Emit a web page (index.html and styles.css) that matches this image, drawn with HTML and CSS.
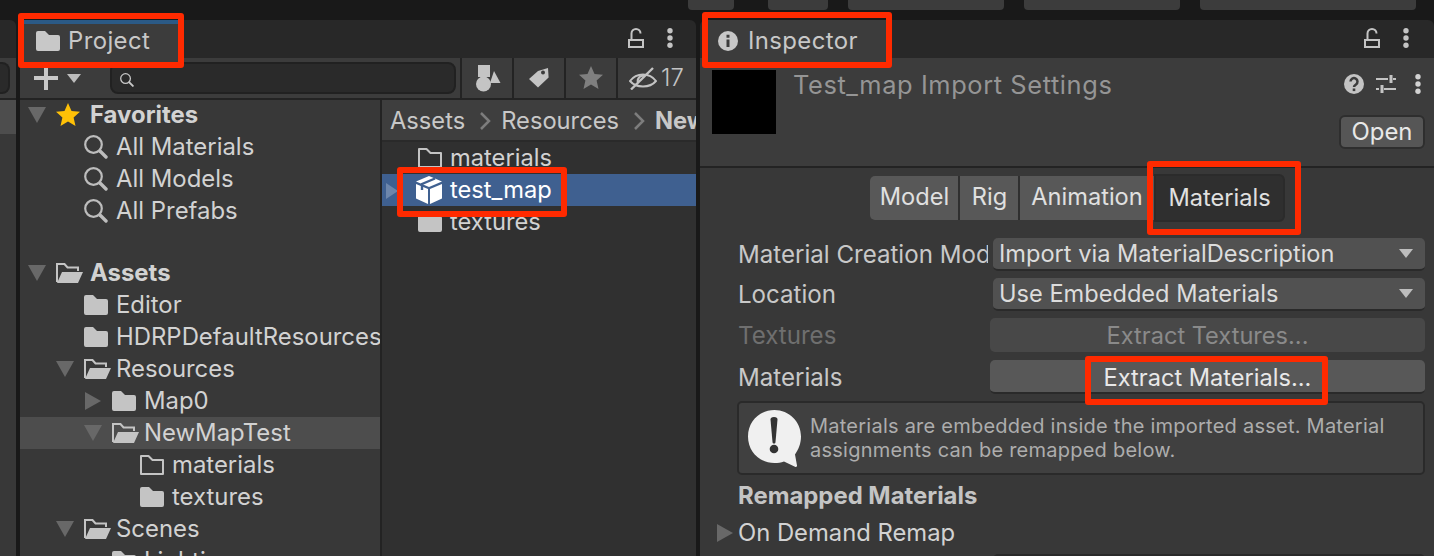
FILE: index.html
```html
<!DOCTYPE html>
<html>
  <head>
    <title>Unity Import Settings</title>
    <link rel="stylesheet" href="styles.css">
  </head>
  <body>
    <svg class="defs" width="0" height="0">
      <symbol id="folder" viewBox="0 0 24 20"><path d="M2 0h7l4 4h9a2 2 0 0 1 2 2v12a2 2 0 0 1-2 2H2a2 2 0 0 1-2-2V2a2 2 0 0 1 2-2z" fill="currentColor"/></symbol>
      <symbol id="folder-line" viewBox="0 0 24 20"><path d="M1 19V1h7.5l4 4H23v14z" fill="none" stroke="currentColor" stroke-width="2" stroke-linejoin="round"/></symbol>
      <symbol id="folder-open" viewBox="0 0 27 20"><path d="M1 19V1h7.5l3 3.5H22V8" fill="none" stroke="currentColor" stroke-width="2"/><path d="M1 20l5-11h21l-5 11z" fill="currentColor"/></symbol>
      <symbol id="lock" viewBox="0 0 16 20"><path d="M1 12h14v7H1z" fill="none" stroke="currentColor" stroke-width="2"/><path d="M3.500 12V5.500a4.500 4.500 0 0 1 9 0" fill="none" stroke="currentColor" stroke-width="2"/></symbol>
      <symbol id="dots" viewBox="0 0 6 20"><circle cx="3" cy="2.700" r="2.700" fill="currentColor"/><circle cx="3" cy="10" r="2.700" fill="currentColor"/><circle cx="3" cy="17.300" r="2.700" fill="currentColor"/></symbol>
      <symbol id="search" viewBox="0 0 24 24"><circle cx="9.500" cy="9.500" r="8.300" fill="none" stroke="currentColor" stroke-width="2.200"/><path d="M16 16l6 6" stroke="currentColor" stroke-width="3.400" stroke-linecap="round"/></symbol>
    </svg>

    <div class="top-bar">
      <span class="top-btn w46"></span>
      <span class="top-btn w60"></span>
      <span class="top-btn w156"></span>
      <span class="top-btn w156"></span>
      <span class="top-btn w216"></span>
    </div>

    <div class="workspace">
      <div class="stub">
        <div class="stub-tabs"></div>
        <div class="stub-tools"><span class="stub-search"></span></div>
        <div class="stub-body"></div>
      </div>

      <section class="panel project">
        <div class="tabbar">
          <div class="tab tab-project">
            <svg class="tab-icon"><use href="#folder"/></svg>
            Project
          </div>
          <div class="tab-actions">
            <svg class="lock"><use href="#lock"/></svg>
            <svg class="dots"><use href="#dots"/></svg>
          </div>
        </div>

        <div class="toolbar">
          <div class="add-btn">
            <svg class="plus" viewBox="0 0 24 24"><path d="M10 0h4v10h10v4H14v10h-4V14H0v-4h10z" fill="currentColor"/></svg>
            <span class="caret"></span>
          </div>
          <div class="search">
            <svg class="search-icon"><use href="#search"/></svg>
          </div>
          <div class="tool-btn tool-type">
            <svg width="25" height="27" viewBox="0 0 25 27"><path d="M2 0h12v12H2z" fill="currentColor"/><circle cx="7.500" cy="19" r="7.500" fill="currentColor"/><path d="M18 6l6.500 12H14z" fill="currentColor"/></svg>
          </div>
          <div class="tool-btn tool-label">
            <svg width="20" height="20" viewBox="0 0 20 20"><path d="M9 3L19 0l.6 9.400L9 19.500 0 11z" fill="currentColor"/><circle cx="14" cy="4.500" r="2" fill="#3c3c3c"/></svg>
          </div>
          <div class="tool-btn tool-star">
            <svg width="24" height="24" viewBox="0 0 24 24"><path d="M12 0l3.500 8 8.500.8-6.400 5.700L19.500 23 12 18.500 4.500 23l1.900-8.500L0 8.800 8.500 8z" fill="#7f7f7f"/></svg>
          </div>
          <div class="tool-btn tool-hidden">
            <svg width="28" height="23" viewBox="0 0 28 23"><path d="M1 14c3-4 7-6.500 13-6.500S24 10 27 14c-3 3.500-7 5.500-13 5.500S4 17.500 1 14z" fill="none" stroke="currentColor" stroke-width="2"/><path d="M9 16a5.500 5.500 0 0 1 7-7" fill="none" stroke="currentColor" stroke-width="2"/><path d="M2 22.500L24 1" stroke="currentColor" stroke-width="2.400"/></svg>
            <span>17</span>
          </div>
        </div>

        <div class="browser">
          <div class="tree">
            <div class="row root">
              <span class="arrow down"></span>
              <svg class="star" viewBox="0 0 24 24"><path d="M12 0l3.500 8 8.500.8-6.400 5.700L19.500 23 12 18.500 4.500 23l1.900-8.500L0 8.800 8.500 8z" fill="#ffc107"/></svg>
              <b>Favorites</b>
            </div>
            <div class="row d1"><span class="arrow"></span><svg class="find"><use href="#search"/></svg>All Materials</div>
            <div class="row d1"><span class="arrow"></span><svg class="find"><use href="#search"/></svg>All Models</div>
            <div class="row d1"><span class="arrow"></span><svg class="find"><use href="#search"/></svg>All Prefabs</div>
            <div class="row-gap"></div>
            <div class="row root">
              <span class="arrow down"></span>
              <svg class="open-icon"><use href="#folder-open"/></svg>
              <b>Assets</b>
            </div>
            <div class="row d1"><span class="arrow"></span><svg class="folder"><use href="#folder"/></svg>Editor</div>
            <div class="row d1"><span class="arrow"></span><svg class="folder"><use href="#folder"/></svg>HDRPDefaultResources</div>
            <div class="row d1"><span class="arrow down"></span><svg class="open-icon"><use href="#folder-open"/></svg>Resources</div>
            <div class="row d2"><span class="arrow right"></span><svg class="folder"><use href="#folder"/></svg>Map0</div>
            <div class="row d2 current"><span class="arrow down"></span><svg class="open-icon"><use href="#folder-open"/></svg>NewMapTest</div>
            <div class="row d3"><span class="arrow"></span><svg class="folder"><use href="#folder-line"/></svg>materials</div>
            <div class="row d3"><span class="arrow"></span><svg class="folder"><use href="#folder"/></svg>textures</div>
            <div class="row d1"><span class="arrow down"></span><svg class="open-icon"><use href="#folder-open"/></svg>Scenes</div>
            <div class="row d2"><span class="arrow"></span><svg class="folder"><use href="#folder"/></svg>Lighting</div>
          </div>

          <div class="files">
            <div class="crumbs">
              <span>Assets</span>
              <svg class="chev" viewBox="0 0 12 20"><path d="M2 2l8 8-8 8" fill="none" stroke="currentColor" stroke-width="2.500"/></svg>
              <span>Resources</span>
              <svg class="chev" viewBox="0 0 12 20"><path d="M2 2l8 8-8 8" fill="none" stroke="currentColor" stroke-width="2.500"/></svg>
              <b>NewMapTest</b>
            </div>
            <div class="file"><svg class="folder"><use href="#folder-line"/></svg>materials</div>
            <div class="file selected">
              <span class="file-arrow"></span>
              <svg class="box" width="26" height="28" viewBox="0 0 26 28"><path d="M13 0l13 5.500L13 11 0 5.500z" fill="#fff"/><path d="M0 8l12 5v15L0 22.500z" fill="#fff"/><path d="M14 13l12-5v14.500L14 28z" fill="#fff"/><path d="M19 2.500L6 8v6" fill="none" stroke="#3f6090" stroke-width="2.400"/></svg>
              test_map
            </div>
            <div class="file"><svg class="folder"><use href="#folder"/></svg>textures</div>
          </div>
        </div>
      </section>

      <section class="panel inspector">
        <div class="tabbar">
          <div class="tab tab-inspector">
            <svg class="info" viewBox="0 0 20 20"><circle cx="10" cy="10" r="10" fill="currentColor"/><path d="M8.500 8.500h3V16h-3zM8.500 3.800h3v3h-3z" fill="#3c3c3c"/></svg>
            Inspector
          </div>
          <div class="tab-actions">
            <svg class="lock"><use href="#lock"/></svg>
            <svg class="dots"><use href="#dots"/></svg>
          </div>
        </div>

        <header class="asset-head">
          <div class="thumb"></div>
          <h2>Test_map Import Settings</h2>
          <div class="head-right">
            <div class="head-icons">
              <svg class="help" viewBox="0 0 20 20"><circle cx="10" cy="10" r="10" fill="currentColor"/><path d="M6.500 7.500a3.500 3.500 0 1 1 5.500 3c-1.200.8-2 1.200-2 2.500" fill="none" stroke="#3c3c3c" stroke-width="2.500"/><rect x="8.700" y="14.500" width="2.600" height="2.600" fill="#3c3c3c"/></svg>
              <svg class="sliders" viewBox="0 0 20 20"><path d="M0 5h12M17 5h3M0 15h3M8 15h12" stroke="currentColor" stroke-width="2"/><path d="M15 1v8M6 11v8" stroke="currentColor" stroke-width="3"/></svg>
              <svg class="dots"><use href="#dots"/></svg>
            </div>
            <div class="open-btn">Open</div>
          </div>
        </header>

        <div class="inspector-body">
          <div class="seg">
            <div class="seg-item seg-model">Model</div>
            <div class="seg-item seg-rig">Rig</div>
            <div class="seg-item seg-anim">Animation</div>
            <div class="seg-item seg-mat">Materials</div>
          </div>

          <div class="field first">
            <label>Material Creation Mode</label>
            <div class="dropdown">Import via MaterialDescription<span class="caret"></span></div>
          </div>
          <div class="field">
            <label>Location</label>
            <div class="dropdown">Use Embedded Materials<span class="caret"></span></div>
          </div>
          <div class="field field-btn">
            <label class="disabled">Textures</label>
            <div class="btn disabled">Extract Textures...</div>
          </div>
          <div class="field field-btn">
            <label>Materials</label>
            <div class="btn">Extract Materials...</div>
          </div>

          <div class="helpbox">
            <svg class="bubble" width="53" height="57" viewBox="0 0 53 57"><path d="M26.500 0C41 0 53 11.500 53 26.500c0 7-2.500 13-6 18l2 11c.2 1.300-.8 1.700-2 1.200L36 51.500c-3 1-6 1.500-9.500 1.500C11.500 53 0 41.500 0 26.500S11.500 0 26.500 0z" fill="#f0f0f0"/><path d="M22.500 9.500c0-1.500 1-2.500 3.500-2.500s3.500 1 3.500 2.500L27.500 32c-.1 1-.6 1.500-1.500 1.500s-1.400-.5-1.500-1.500z" fill="#333"/><circle cx="26" cy="39" r="4.300" fill="#333"/></svg>
            <p>Materials are embedded inside the imported asset. Material assignments can be remapped below.</p>
          </div>

          <div class="section-title">Remapped Materials</div>
          <div class="foldout"><span class="arrow right"></span>On Demand Remap</div>
          <div class="bottom-field"></div>
        </div>
      </section>
    </div>

    <!-- red annotations on top of the screenshot -->
    <span class="mark mark-project"></span>
    <span class="mark mark-inspector"></span>
    <span class="mark mark-file"></span>
    <span class="mark mark-tab"></span>
    <span class="mark mark-extract"></span>
  </body>
</html>
```

FILE: styles.css
```css
* {
  box-sizing: border-box;
}
html,
body {
  height: 556px;
}
body {
  margin: 0;
  overflow: hidden;
  position: relative;
  background-color: #191919;
  color: #d2d2d2;
  font-family: Inter, "Liberation Sans", sans-serif;
  font-size: 23.9px;
  line-height: 32px;
  white-space: nowrap;
}
.defs {
  position: absolute;
}
svg {
  display: block;
  flex: none;
}
b {
  font-weight: 700;
}

/* top toolbar */
.top-bar {
  height: 20px;
  display: flex;
  gap: 20px;
  padding-left: 688px;
}
.top-btn {
  height: 10px;
  background-color: #3c3c3c;
  border-radius: 0 0 4px 4px;
}
.w46 { width: 46px; margin-right: 14px; }
.w60 { width: 60px; }
.w156 { width: 156px; }
.w216 { width: 216px; }

/* panels */
.workspace {
  height: 536px;
  display: flex;
}
.stub {
  width: 16px;
  margin-right: 4px;
  display: flex;
  flex-direction: column;
}
.stub-tabs {
  height: 38px;
  background-color: #282828;
  border-top-right-radius: 6px;
}
.stub-tools {
  height: 42px;
  background-color: #3c3c3c;
  border-bottom: 2px solid #232323;
  padding-top: 4px;
}
.stub-search {
  display: block;
  width: 10px;
  height: 32px;
  background-color: #2a2a2a;
  border: 2px solid #212121;
  border-left: 0;
  border-radius: 0 8px 8px 0;
}
.stub-body {
  flex: 1;
  background-color: #383838;
}
.stub-body::before {
  content: "";
  display: block;
  height: 34px;
  background-color: #4d4d4d;
}
.panel {
  display: flex;
  flex-direction: column;
}
.project {
  width: 676px;
  margin-right: 4px;
}
.inspector {
  flex: 1;
}
.tabbar {
  height: 38px;
  display: flex;
  justify-content: space-between;
  background-color: #282828;
  border-radius: 6px 6px 0 0;
  flex: none;
}
.tab {
  background-color: #3c3c3c;
  color: #c8c8c8;
  display: flex;
  align-items: center;
  letter-spacing: 0.4px;
}
.tab-project {
  width: 154px;
  margin-left: 4px;
  padding-left: 12px;
  border-top: 4px solid #2b5a86;
}
.tab-inspector {
  width: 184px;
  margin-left: 4px;
  padding: 4px 0 0 14px;
}
.tab-icon {
  width: 24px;
  height: 20px;
  margin-right: 8px;
}
.info {
  width: 20px;
  height: 20px;
  margin-right: 10px;
}
.tab-actions {
  display: flex;
  align-items: center;
  gap: 23px;
  padding: 0 23px 2px 0;
  color: #c4c4c4;
}
.inspector .tab-actions {
  padding-right: 25px;
}
.lock {
  width: 16px;
  height: 20px;
}
.dots {
  width: 6px;
  height: 20px;
}

/* project toolbar */
.toolbar {
  height: 42px;
  flex: none;
  display: flex;
  align-items: stretch;
  background-color: #3c3c3c;
  border-bottom: 2px solid #232323;
}
.add-btn {
  width: 80px;
  padding-left: 14px;
  display: flex;
  align-items: center;
  gap: 9px;
  color: #c8c8c8;
}
.plus {
  width: 24px;
  height: 24px;
}
.caret {
  width: 0;
  height: 0;
  border-left: 7px solid transparent;
  border-right: 7px solid transparent;
  border-top: 9px solid #bdbdbd;
}
.search {
  width: 346px;
  margin: 4px 4px 4px 10px;
  background-color: #2a2a2a;
  border: 2px solid #212121;
  border-radius: 8px;
  padding: 9px 0 0 8px;
  color: #c8c8c8;
}
.search-icon {
  width: 14px;
  height: 14px;
}
.tool-btn {
  display: flex;
  align-items: center;
  justify-content: center;
  border-left: 2px solid #232323;
  color: #c4c4c4;
}
.tool-type {
  width: 52px;
  padding-left: 2px;
}
.tool-label {
  width: 52px;
}
.tool-star {
  width: 52px;
}
.tool-hidden {
  flex: 1;
  justify-content: flex-start;
  gap: 4px;
  padding-left: 11px;
  font-weight: 300;
}

/* tree and file list */
.browser {
  flex: 1;
  display: flex;
  min-height: 0;
  background-color: #383838;
}
.tree {
  width: 360px;
  overflow: hidden;
}
.row {
  height: 32px;
  display: flex;
  align-items: center;
  padding-left: 8px;
  position: relative;
  top: -1px;
}
.row-gap {
  height: 30px;
}
.d1 { padding-left: 36px; }
.d2 { padding-left: 64px; }
.d3 { padding-left: 92px; }
.current {
  background-color: #4d4d4d;
}
.arrow {
  width: 28px;
  flex: none;
  display: block;
}
.arrow.down::before,
.arrow.right::before {
  content: "";
  display: block;
  width: 0;
  height: 0;
}
.arrow.down::before {
  border-left: 9px solid transparent;
  border-right: 9px solid transparent;
  border-top: 16px solid #686868;
}
.arrow.right::before {
  margin-left: 1px;
  border-top: 9px solid transparent;
  border-bottom: 9px solid transparent;
  border-left: 16px solid #686868;
}
.star {
  width: 24px;
  height: 24px;
  margin-right: 10px;
}
.find {
  width: 24px;
  height: 24px;
  margin-right: 8px;
  color: #bdbdbd;
}
.folder {
  width: 24px;
  height: 20px;
  margin-right: 8px;
  color: #c4c4c4;
}
.open-icon {
  width: 27px;
  height: 20px;
  margin-right: 5px;
  color: #c4c4c4;
}
.root .open-icon {
  margin-right: 7px;
}
.files {
  flex: 1;
  min-width: 0;
  overflow: hidden;
  border-left: 2px solid #232323;
  background-color: #303030;
  font-size: 23.7px;
}
.crumbs {
  height: 42px;
  display: flex;
  align-items: center;
  padding: 1px 0 0 8px;
  background-color: #3e3e3e;
  border-bottom: 2px solid #2a2a2a;
  color: #c8c8c8;
}
.chev {
  width: 12px;
  height: 20px;
  margin: 0 10px 0 14px;
  color: #7d7d7d;
}
.file {
  height: 32px;
  display: flex;
  align-items: center;
  padding-left: 36px;
}
.selected {
  position: relative;
  background-color: #3f6090;
  color: #fff;
  padding-left: 34px;
}
.file-arrow {
  position: absolute;
  left: 4px;
  top: 9px;
  border-top: 8px solid transparent;
  border-bottom: 8px solid transparent;
  border-left: 12px solid #6d86ab;
}
.box {
  margin-right: 8px;
}

/* inspector */
.asset-head {
  height: 110px;
  flex: none;
  display: flex;
  padding: 12px 9px 0 12px;
  background-color: #3c3c3c;
  border-bottom: 2px solid #232323;
}
.thumb {
  width: 64px;
  height: 64px;
  background-color: #000;
}
.asset-head h2 {
  margin: -1px 0 0 17px;
  font-size: 25.4px;
  font-weight: 400;
  letter-spacing: 0.6px;
  color: #959595;
  flex: 1;
}
.head-right {
  display: flex;
  flex-direction: column;
  align-items: flex-end;
  gap: 21px;
  padding-top: 4px;
}
.head-icons {
  display: flex;
  align-items: center;
  padding-right: 4px;
}
.help,
.sliders {
  width: 20px;
  height: 20px;
  color: #c4c4c4;
}
.help {
  margin-right: 12px;
}
.sliders {
  margin-right: 19px;
}
.open-btn {
  height: 34px;
  width: 86px;
  text-align: center;
  line-height: 30px;
  background-color: #565656;
  border: 2px solid #2e2e2e;
  border-radius: 6px;
  color: #e8e8e8;
}
.inspector-body {
  flex: 1;
  min-height: 0;
  overflow: hidden;
  background-color: #383838;
  padding: 6px 9px 0 38px;
  font-size: 23.6px;
}
.seg {
  display: flex;
  align-items: center;
  height: 48px;
  margin-left: 132px;
}
.seg-item {
  height: 44px;
  background-color: #585858;
  border-right: 2px solid #2f2f2f;
  text-align: center;
  line-height: 42px;
  color: #e0e0e0;
}
.seg-model { width: 90px; border-radius: 5px 0 0 5px; padding-left: 1px; }
.seg-rig { width: 60px; padding-left: 1px; }
.seg-anim { width: 134px; border-right: 0; }
.seg-mat {
  width: 131px;
  height: 48px;
  border: 2px solid #2b2b2b;
  border-radius: 0 6px 6px 0;
  background-color: #2f2f2f;
  line-height: 44px;
}
.field {
  height: 40px;
  display: flex;
  align-items: center;
}
.first {
  margin-top: 12px;
}
.field label {
  width: 250px;
  margin-right: 5px;
  padding-top: 1px;
  overflow: hidden;
  flex: none;
  color: #c8c8c8;
  font-size: 24.1px;
}
label.disabled {
  color: #6f6f6f;
}
.dropdown {
  flex: 1;
  height: 33px;
  margin-top: 1px;
  line-height: 30px;
  padding-left: 6px;
  display: flex;
  justify-content: space-between;
  align-items: center;
  background-color: #515151;
  border-bottom: 2px solid #2a2a2a;
  border-radius: 5px;
  color: #dcdcdc;
}
.dropdown .caret {
  margin-right: 12px;
}
.field-btn {
  height: 42px;
}
.field-btn label {
  width: 252px;
  margin-right: 0;
}
.btn {
  flex: 1;
  height: 34px;
  text-align: center;
  line-height: 36px;
  background-color: #585858;
  border-bottom: 2px solid #2a2a2a;
  border-radius: 5px;
  color: #e8e8e8;
}
.btn.disabled {
  background-color: #484848;
  color: #8a8a8a;
  border-bottom: 0;
}
.helpbox {
  height: 74px;
  margin: 3px 0 0 -1px;
  display: flex;
  align-items: center;
  gap: 9px;
  padding-left: 9px;
  background-color: #404040;
  border: 2px solid #2a2a2a;
  border-radius: 5px;
}
.bubble {
  width: 53px;
  height: 57px;
}
.helpbox p {
  margin: 0;
  white-space: normal;
  font-size: 20px;
  line-height: 24px;
  letter-spacing: 0.24px;
  color: #adadad;
}
.section-title {
  margin-top: 3px;
  height: 36px;
  line-height: 36px;
  font-size: 23.9px;
  font-weight: 700;
  color: #c4c4c4;
}
.foldout {
  height: 38px;
  display: flex;
  align-items: center;
  margin-left: -22px;
  font-size: 23.8px;
}
.foldout .arrow {
  width: 22px;
}
.bottom-field {
  height: 10px;
  margin: 2px 0 0 255px;
  background-color: #515151;
  border-top: 2px solid #2a2a2a;
  border-radius: 5px 5px 0 0;
}

/* annotations */
.mark {
  position: absolute;
  border: 6px solid #ff2a00;
  border-radius: 3px;
}
.mark-project { left: 18px; top: 13px; width: 166px; height: 55px; }
.mark-inspector { left: 702px; top: 12px; width: 190px; height: 56px; }
.mark-file { left: 397px; top: 167px; width: 170px; height: 50px; }
.mark-tab { left: 1147px; top: 161px; width: 154px; height: 74px; }
.mark-extract { left: 1085px; top: 356px; width: 243px; height: 49px; }
```
